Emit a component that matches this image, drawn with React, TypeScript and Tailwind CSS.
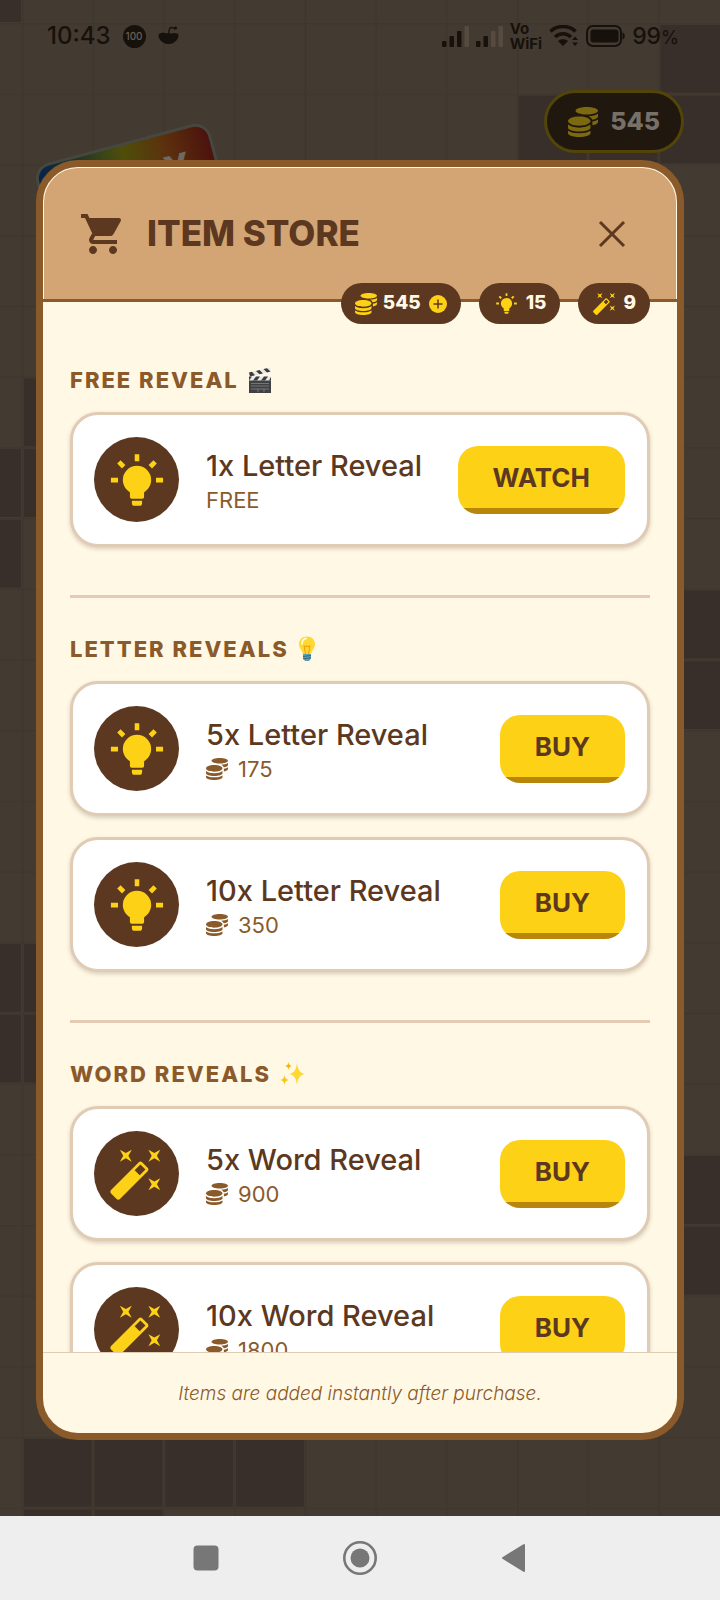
import { useState } from 'react'
import type { ReactNode } from 'react'
import { FaCoins } from 'react-icons/fa'
import { MdShoppingCart } from 'react-icons/md'

interface IconProps {
  className?: string
}

interface StoreItem {
  id: string
  name: string
  icon: 'bulb' | 'wand'
  price: number
}

interface StoreSection {
  title: string
  emoji: ReactNode
  items: StoreItem[]
}

function BulbIcon({ className }: IconProps) {
  return (
    <svg className={className} viewBox="0 0 24 24" fill="currentColor" aria-hidden="true">
      <path d="M12,7A5,5 0 0,1 17,12C17,13.9 15.900,15.400 14.500,16.300V18A.6,.6 0 0,1 13.900,18.600H10.100A.6,.6 0 0,1 9.500,18V16.300C8.100,15.400 7,13.900 7,12A5,5 0 0,1 12,7M13.800,19.300V20.200A.9,.9 0 0,1 12.900,21.100H11.100A.9,.9 0 0,1 10.200,20.200V19.300H13.800M18.700,11.200H21.200V12.900H18.700V11.200M2.800,11.200H5.300V12.900H2.800V11.200M12.800,2.900V5.400H11.200V2.900H12.800M6.200,5L7.900,6.700L6.700,7.900L5,6.200L6.200,5M16.100,6.700L17.800,5L19,6.200L17.300,7.900L16.100,6.700Z" />
    </svg>
  )
}

function WandIcon({ className }: IconProps) {
  return (
    <svg className={className} viewBox="0 0 24 24" fill="currentColor" aria-hidden="true">
      <path d="M7.5,5.6L5,7L6.4,4.5L5,2L7.5,3.4L10,2L8.6,4.5L10,7L7.5,5.6M19.5,15.4L22,14L20.6,16.5L22,19L19.5,17.6L17,19L18.4,16.5L17,14L19.5,15.4M22,2L20.6,4.5L22,7L19.5,5.6L17,7L18.4,4.5L17,2L19.5,3.4L22,2M13.34,12.78L15.78,10.34L13.66,8.22L11.22,10.66L13.34,12.78M14.37,7.29L16.71,9.63C17.1,10 17.1,10.65 16.71,11.04L5.04,22.71C4.65,23.1 4,23.1 3.63,22.71L1.29,20.37C0.9,20 0.9,19.35 1.29,18.96L12.96,7.29C13.35,6.9 14,6.9 14.37,7.29Z" />
    </svg>
  )
}

function ClapperEmoji() {
  return (
    <svg className="h-[26px] w-[24px]" viewBox="0 0 24 26" aria-hidden="true">
      <path d="M1 5.5 22 .5l1 4L2 9.500z" fill="#e8e8e8" />
      <path d="M1 5.500 4 4.800 7 8.300 2 9.500zM8 3.900l3.500-.9L15 6.500l-3.500.8zM15.500 2.100 19 1.300 22.500 4.600 19 5.500z" fill="#3c3c3c" />
      <path d="M1 10h22v16H1z" fill="#3f4143" />
      <path d="M1 9.500h22v4H1z" fill="#e8e8e8" />
      <path d="M1 9.500h3l-3 4zM8 9.500h4l-3 4H5zM16 9.500h4l-3 4h-4zM23 10v3.500h-2z" fill="#3c3c3c" />
      <path d="M3 16.500h18M3 19h18M3 22h18M10 22v3M16 22v3" stroke="#8a8c8e" strokeWidth=".7" />
    </svg>
  )
}

function BulbEmoji() {
  return (
    <svg className="h-[26px] w-[18px]" viewBox="3 0 18 26" aria-hidden="true">
      <path d="M12 .5c5 0 8 3.500 8 7.800 0 4.200-3.200 5.500-4 10.200H8c-.8-4.700-4-6-4-10.200C4 4 7 .5 12 .5z" fill="#fdd835" />
      <path d="M7 8c0-3 1.500-5 4-5.500" stroke="#fff9c4" strokeWidth="1.800" fill="none" strokeLinecap="round" />
      <path d="M10.500 18 9 9.500l2 1.500 1-1.500 1 1.500 2-1.500-1.500 8.500" stroke="#f59f00" fill="none" />
      <path d="M8 18h8v4.500l-2 2.500h-4l-2-2.500z" fill="#5d9fb5" />
      <path d="M8 20.500l8-1M8 22.800l8-1" stroke="#33687c" />
    </svg>
  )
}

function SparklesEmoji() {
  return (
    <svg className="h-[26px] w-[26px]" viewBox="0 0 26 26" aria-hidden="true" fill="#fdd835">
      <path d="M17 2c1 7 2.500 9.500 8 11-5.500 1.500-7 4-8 11-1-7-2.500-9.500-8-11 5.500-1.500 7-4 8-11z" />
      <path d="M8.500 1c.4 2.700 1 3.500 3.500 4-2.500.5-3.100 1.300-3.500 4-.4-2.700-1-3.500-3.500-4 2.500-.5 3.100-1.300 3.500-4z" fill="#f4b400" />
      <path d="M4.500 14c.5 3 1.200 4.200 4 5-2.800.8-3.500 2-4 5-.5-3-1.200-4.200-4-5 2.800-.8 3.500-2 4-5z" fill="#f9c51a" />
    </svg>
  )
}

const sections: StoreSection[] = [
  {
    title: 'FREE REVEAL',
    emoji: <ClapperEmoji />,
    items: [{ id: 'free-letter', name: '1x Letter Reveal', icon: 'bulb', price: 0 }],
  },
  {
    title: 'LETTER REVEALS',
    emoji: <BulbEmoji />,
    items: [
      { id: 'letter-5', name: '5x Letter Reveal', icon: 'bulb', price: 175 },
      { id: 'letter-10', name: '10x Letter Reveal', icon: 'bulb', price: 350 },
    ],
  },
  {
    title: 'WORD REVEALS',
    emoji: <SparklesEmoji />,
    items: [
      { id: 'word-5', name: '5x Word Reveal', icon: 'wand', price: 900 },
      { id: 'word-10', name: '10x Word Reveal', icon: 'wand', price: 1800 },
    ],
  },
]

// [column, row] of the filled squares in the crossword backdrop
const filledCells = [
  [0, 0], [10, 1], [8, 2], [9, 2], [10, 2],
  [1, 6], [0, 7], [1, 7], [0, 8],
  [10, 9], [10, 10],
  [0, 14], [1, 14], [0, 15], [1, 15],
  [10, 17], [10, 18],
  [1, 21], [2, 21], [3, 21], [4, 21], [1, 22], [2, 22],
]

const CELL = 70.7

function Backdrop() {
  return (
    <svg className="absolute inset-0 h-full w-full" aria-hidden="true">
      <defs>
        <pattern id="grid" x="22" y="23" width={CELL} height={CELL} patternUnits="userSpaceOnUse">
          <path d={`M0 .5H${CELL}M.5 0V${CELL}`} stroke="#3f372e" strokeWidth="2" />
        </pattern>
        <linearGradient id="rainbow">
          <stop offset="0" stopColor="#062150" />
          <stop offset=".22" stopColor="#1b3428" />
          <stop offset=".5" stopColor="#4e4e0a" />
          <stop offset=".74" stopColor="#5c310d" />
          <stop offset="1" stopColor="#4c110e" />
        </linearGradient>
      </defs>
      <rect width="100%" height="100%" fill="#433a31" />
      <rect width="100%" height="100%" fill="url(#grid)" />
      {filledCells.map(([col, row]) => (
        <rect
          key={`${col}-${row}`}
          x={24 + (col - 1) * CELL}
          y={25 + (row - 1) * CELL}
          width={CELL - 3}
          height={CELL - 3}
          fill="#392f2a"
        />
      ))}
      <g transform="rotate(-15 34 168)">
        <rect x="34" y="168" width="178" height="90" rx="15" fill="url(#rainbow)" stroke="#46473f" strokeWidth="3" />
        <text x="160" y="216" fontFamily="Inter, sans-serif" fontSize="34" fontWeight="800" fill="#6d6a64">
          Y
        </text>
      </g>
    </svg>
  )
}

function SignalIcon({ level }: { level: number }) {
  return (
    <svg className="h-[22px] w-[27px]" viewBox="0 0 27 22" aria-hidden="true">
      {[6, 11, 16, 21].map((h, i) => (
        <rect key={h} x={i * 7.5} y={22 - h} width="4.500" height={h} rx="1" fill={i < level ? '#17110b' : '#574a3f'} />
      ))}
    </svg>
  )
}

function StatusBar() {
  return (
    <div className="flex h-[72px] items-center justify-between pr-[41px] pl-[47px] text-[#17110b]">
      <div className="flex items-center gap-3">
        <span className="text-2xl font-medium">10:43</span>
        <span className="flex size-[23px] items-center justify-center rounded-full bg-[#17110b] text-[10px] font-medium text-[#6a6055]">
          100
        </span>
        <svg className="h-5 w-[21px]" viewBox="0 0 21 20" fill="currentColor" aria-hidden="true">
          <path d="M.5 9C1.500 6.500 3.500 7.500 5.500 6.500c2 1 4 1 5.500 .5 2 .8 3.500 .5 5 0C18 7.500 20 7 20.500 9c0 3-1.500 5.500-4 7-2.500 2.800-9.500 2.800-12 0C2 14.500 .5 12 .5 9z" />
          <path d="M11 8c-.5-4 .5-6.500 2.500-6.500 2 0 2.500 2 4.500.5" stroke="currentColor" strokeWidth="1.300" fill="none" />
          <circle cx="17.500" cy="2" r="1.500" />
        </svg>
      </div>
      <div className="flex items-center gap-[7px]">
        <SignalIcon level={3} />
        <SignalIcon level={2} />
        <span className="flex flex-col text-[15px] leading-[15px] font-bold">
          <span>Vo</span>
          <span>WiFi</span>
        </span>
        <svg className="h-[22px] w-[30px]" viewBox="0 0 30 22" aria-hidden="true">
          <path d="M1.500 6.500C8-.2 20-.2 26.500 6.500M6 12c4.500-4.500 11.500-4.500 16 0" stroke="currentColor" strokeWidth="3.500" fill="none" />
          <path d="M9 16c2.500-2.500 7.500-2.500 10 0l-5 5zM23 15l3-3.500 3 3.500zM23 17.500l3 3.500 3-3.500z" fill="currentColor" />
        </svg>
        <svg className="h-[22px] w-[39px]" viewBox="0 0 39 22" aria-hidden="true">
          <rect x="1" y="1" width="34" height="20" rx="6" stroke="currentColor" strokeWidth="2" fill="none" />
          <rect x="4.500" y="4.500" width="28" height="13" rx="3" fill="currentColor" />
          <path d="M36.500 7.500c3 1 3 6 0 7z" fill="currentColor" />
        </svg>
        <span className="text-[23px] font-medium">
          99<span className="text-lg">%</span>
        </span>
      </div>
    </div>
  )
}

function Chip({ children }: { children: ReactNode }) {
  return (
    <span className="flex h-[41px] items-center gap-[6px] rounded-full bg-[#5c3820] px-[14px] text-[19px] font-extrabold text-[#fff8e7]">
      {children}
    </span>
  )
}

function ItemCard({ item }: { item: StoreItem }) {
  const Icon = item.icon === 'bulb' ? BulbIcon : WandIcon

  return (
    <li className="flex items-center rounded-[28px] border-[3px] border-[#e0cbb5] bg-white py-[22px] pr-[22px] pl-[21px] shadow-[0_2px_4px_rgba(60,40,10,0.2)]">
      <span className="flex size-[85px] shrink-0 items-center justify-center rounded-full bg-[#5c3820] text-[#fdd116]">
        <Icon className={item.icon === 'bulb' ? 'size-[68px]' : 'size-[57px]'} />
      </span>
      <div className="ml-[27px] flex-1">
        <h4 className="text-[29px] leading-10 font-medium whitespace-nowrap text-[#5c3820]">{item.name}</h4>
        <p className="flex items-center gap-[10px] text-[22px] leading-7 text-[#8b5a2b]">
          {item.price === 0 ? (
            'FREE'
          ) : (
            <>
              <FaCoins className="size-[22px]" />
              {item.price}
            </>
          )}
        </p>
      </div>
      <button
        type="button"
        className="h-[68px] rounded-[20px] bg-[linear-gradient(to_top,#b8860b_6px,#fdd116_6px)] px-[35px] pb-[5px] text-[26px] font-bold text-[#5c3820]"
      >
        {item.price === 0 ? 'WATCH' : 'BUY'}
      </button>
    </li>
  )
}

function StoreDialog({ onClose }: { onClose: () => void }) {
  return (
    <section
      role="dialog"
      aria-labelledby="store-title"
      className="relative mx-9 mb-[76px] flex min-h-0 flex-1 flex-col overflow-hidden rounded-[42px] border-[7px] border-[#8b5a2b] bg-[#fff8e5]"
    >
      {/* Header */}
      <header className="relative shrink-0 border-b-[3px] border-[#8b5a2b] px-px pt-px">
        <div className="flex h-[131px] items-center rounded-t-[34px] bg-[#d3a574] pr-[40px] pl-[35px] text-[#5c3820]">
          <MdShoppingCart className="size-12" />
          <h2 id="store-title" className="ml-[20px] flex-1 text-[35px] font-extrabold">
            ITEM STORE
          </h2>
          <button type="button" aria-label="Close" onClick={onClose} className="size-12">
            <svg viewBox="0 0 48 48" stroke="currentColor" strokeWidth="3" aria-hidden="true">
              <path d="M12 12l24 24M36 12l-24 24" />
            </svg>
          </button>
        </div>
        {/* Balances sit across the header line */}
        <div className="absolute right-[27px] -bottom-[25px] flex gap-[18px]">
          <Chip>
            <FaCoins className="size-[22px] text-[#fdd116]" />
            545
            <button type="button" aria-label="Get more coins" className="ml-[2px]">
              <svg className="size-[18px]" viewBox="0 0 18 18" aria-hidden="true">
                <circle cx="9" cy="9" r="9" fill="#fdd116" />
                <path d="M9 4.500v9M4.500 9h9" stroke="#5c3820" strokeWidth="1.500" />
              </svg>
            </button>
          </Chip>
          <Chip>
            <BulbIcon className="size-[27px] text-[#fdd116]" />
            15
          </Chip>
          <Chip>
            <WandIcon className="size-[25px] text-[#fdd116]" />9
          </Chip>
        </div>
      </header>

      {/* Items */}
      <div className="min-h-0 flex-1 overflow-y-auto px-[27px] pt-[27px] [scrollbar-width:none]">
        {sections.map((section) => (
          <div key={section.title} className="border-b-[3px] border-[#e5cbb5] pt-[35px] pb-12 last:border-b-0">
            <h3 className="flex h-8 items-center gap-[9px] text-[22px] font-extrabold tracking-[2px] text-[#8b5a2b]">
              {section.title}
              {section.emoji}
            </h3>
            <ul className="mt-4 space-y-[21px]">
              {section.items.map((item) => (
                <ItemCard key={item.id} item={item} />
              ))}
            </ul>
          </div>
        ))}
      </div>

      <footer className="shrink-0 border-t border-[#e0cbb5] pt-[27px] pb-[25px] text-center text-[19px] leading-7 font-light text-[#8b5a2b] italic">
        Items are added instantly after purchase.
      </footer>
    </section>
  )
}

export default function App() {
  const [open, setOpen] = useState(true)

  return (
    <div className="flex h-screen flex-col font-['Inter',sans-serif]">
      <main className="relative flex min-h-0 flex-1 flex-col bg-[#433a31]">
        <Backdrop />
        <div className="relative">
          <StatusBar />
          <div className="flex h-[88px] justify-end pt-[18px] pr-9">
            <div className="flex h-[63px] items-center gap-3 rounded-full border-[3px] border-[#524509] bg-[#20170f] px-[21px] text-[25px] font-extrabold text-[#777069]">
              <FaCoins className="size-[30px] text-[#7d690f]" />
              545
            </div>
          </div>
        </div>
        {open && <StoreDialog onClose={() => setOpen(false)} />}
      </main>

      {/* System navigation */}
      <nav className="flex h-[84px] shrink-0 items-center justify-center gap-[120px] bg-[#eee] text-[#777]">
        <button type="button" aria-label="Recent apps" className="size-[34px]">
          <svg viewBox="0 0 34 34" fill="currentColor">
            <rect x="4.500" y="4.500" width="25" height="25" rx="4" />
          </svg>
        </button>
        <button type="button" aria-label="Home" className="size-[34px]">
          <svg viewBox="0 0 34 34" fill="currentColor">
            <circle cx="17" cy="17" r="15.700" fill="none" stroke="currentColor" strokeWidth="2.600" />
            <circle cx="17" cy="17" r="9.500" />
          </svg>
        </button>
        <button type="button" aria-label="Back" className="size-[34px]">
          <svg viewBox="0 0 34 34" fill="currentColor" stroke="currentColor" strokeWidth="2" strokeLinejoin="round">
            <path d="M6 17 27 4v26z" />
          </svg>
        </button>
      </nav>
    </div>
  )
}
